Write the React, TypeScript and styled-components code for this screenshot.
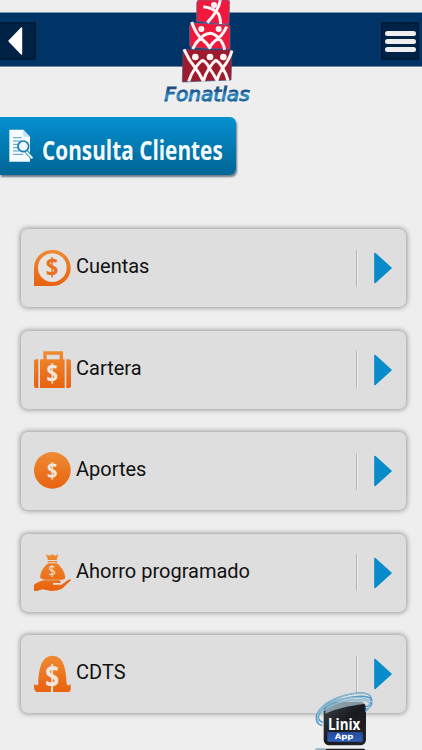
import React from 'react';
import styled, { createGlobalStyle } from 'styled-components';

const GlobalStyle = createGlobalStyle`
  * { box-sizing: border-box; }
  html, body { margin: 0; padding: 0; overflow: hidden; background: #eeeeee; }
`;

const Screen = styled.div`
  position: relative;
  width: 422px;
  height: 750px;
  overflow: hidden;
  background: #eeeeee;
  font-family: Roboto, 'Liberation Sans', sans-serif;
`;

const Header = styled.header`
  display: flex;
  justify-content: space-between;
  align-items: flex-start;
  height: 55px;
  margin-top: 12px;
  padding: 9px 3px 0 0;
  background: #003467;
  border-top: 1px solid #8095ad;
  border-bottom: 1px solid #7187a2;
`;

const HeaderButton = styled.button<{ $flush?: boolean }>`
  display: flex;
  align-items: center;
  justify-content: center;
  width: ${p => (p.$flush ? 36 : 38)}px;
  height: 38px;
  padding: ${p => (p.$flush ? '0 3px 0 0' : '0')};
  background: #002345;
  border: 2px solid #001b38;
  border-left-width: ${p => (p.$flush ? 0 : 2)}px;
`;

const MenuBars = styled.span`
  display: flex;
  flex-direction: column;
  gap: 3px;
`;

const MenuBar = styled.span`
  width: 31px;
  height: 5px;
  border-radius: 3px;
  background: #eeeef0;
`;

const Logo = styled.svg`
  position: absolute;
  left: 150px;
  top: 0;
  width: 120px;
  height: 110px;
`;

const Banner = styled.h1`
  display: flex;
  align-items: center;
  width: 236px;
  height: 58px;
  margin: 50px 0 0;
  padding-left: 9px;
  border-radius: 0 6px 6px 0;
  background: linear-gradient(#0590d0, #006596);
  box-shadow: 1px 2px 2px rgba(40, 60, 75, 0.65);
`;

const BannerIcon = styled.svg`
  width: 25px;
  height: 34px;
  flex: none;
`;

const BannerText = styled.span`
  margin: 8px 0 0 8px;
  font: 700 26.5px/36px 'Open Sans', 'Noto Sans', sans-serif;
  color: #f4fbff;
  white-space: nowrap;
  transform: scaleX(0.785);
  transform-origin: left;
`;

const Menu = styled.nav`
  display: flex;
  flex-direction: column;
  gap: 23.5px;
  padding: 54px 16px 0 21px;
`;

const Row = styled.a`
  display: flex;
  align-items: center;
  flex: none;
  height: 78px;
  padding-left: 13px;
  border-radius: 7px;
  background: #dedede;
  color: #111111;
  box-shadow: 0 0 5px 1px rgba(0, 0, 0, 0.36);
`;

const RowIcon = styled.svg`
  width: 37px;
  height: 38px;
  flex: none;
  overflow: visible;
`;

const RowLabel = styled.span`
  flex: 1;
  margin: -4px 0 0 5px;
  font-size: 20px;
  line-height: 28px;
  white-space: nowrap;
`;

const Divider = styled.span`
  width: 2px;
  height: 37px;
  background: linear-gradient(90deg, #b5b5b5 50%, #efefef 50%);
`;

const Chevron = styled.svg`
  width: 18px;
  height: 32px;
  margin: 0 14px 0 16px;
`;

const Badge = styled.svg`
  position: absolute;
  left: 300px;
  top: 680px;
  width: 122px;
  height: 70px;
`;

type DollarProps = { y: number; size: number; fill: string; weight?: number; narrow?: number };

const Dollar = ({ y, size, fill, weight = 700, narrow = 0.9 }: DollarProps) => (
  <text
    transform={`translate(54.5 ${y}) scale(${narrow} 1)`}
    fontSize={size}
    fill={fill}
    textAnchor="middle"
    fontFamily="'Open Sans', sans-serif"
    fontWeight={weight}
  >
    $
  </text>
);

const orange = 'url(#orange)';
const pale = '#f1e6dd';

const icons: Record<string, React.ReactNode> = {
  cuentas: (
    <>
      <path d="M0 110V56A55 54 0 1 1 55 110Z" fill={orange} />
      <circle cx="55" cy="55" r="43" fill="#e6e4e3" />
      <Dollar y={79} size={74} fill="#e97222" />
    </>
  ),
  cartera: (
    <>
      <path d="M33 28V5H82V28" fill="none" stroke={orange} strokeWidth="10" />
      <path d="M6 24H13V110H6Q0 110 0 104V30Q0 24 6 24ZM97 24H104Q111 24 111 30V104Q111 110 104 110H97Z" fill={orange} />
      <rect x="18" y="24" width="74" height="86" fill={orange} />
      <Dollar y={92} size={74} fill={pale} narrow={0.82} />
    </>
  ),
  aportes: (
    <>
      <circle cx="55" cy="54" r="55" fill={orange} />
      <Dollar y={76} size={65} fill={pale} narrow={0.85} />
    </>
  ),
  ahorro: (
    <>
      <path d="M36 0L47 4L55 0L63 4L73 0L68 17H42ZM41 20H70V24H41ZM42 27H69C83 39 95 56 93 73L85 76H32L19 72C17 54 29 38 42 27Z" fill={orange} />
      <Dollar y={66} size={45} fill={pale} weight={500} narrow={0.85} />
      <path d="M0 91C14 82 24 77 36 78L72 78Q84 79 79 86H57V91H82L102 77Q111 72 111 78L84 103Q69 110 52 110L25 105L12 109L0 110Z" fill={orange} />
    </>
  ),
  cdts: (
    <>
      <path d="M13 86C14 31 26 2 55 1C86 2 96 31 98 86Q103 93 109 86Q113 101 106 110H7Q-3 101 1 86Q8 93 13 86Z" fill={orange} />
      <Dollar y={95} size={92} fill={pale} weight={700} narrow={0.8} />
      <path d="M54 97V111" stroke={pale} strokeWidth="6" />
    </>
  ),
};

const rows = [
  { icon: 'cuentas', label: 'Cuentas' },
  { icon: 'cartera', label: 'Cartera' },
  { icon: 'aportes', label: 'Aportes' },
  { icon: 'ahorro', label: 'Ahorro programado' },
  { icon: 'cdts', label: 'CDTS' },
];

const FonatlasLogo = () => (
  <Logo viewBox="0 0 360 330">
    <defs>
      <linearGradient id="word" x1="0" y1="0" x2="0" y2="1">
        <stop offset="0.25" stopColor="#174c83" />
        <stop offset="0.6" stopColor="#2f91cb" />
        <stop offset="0.85" stopColor="#174d85" />
      </linearGradient>
    </defs>
    <path d="M144 0H234Q239 0 239 7L237 71L215 73L140 64V8Z" fill="#f0183c" stroke="#5874a5" strokeWidth="2" />
    <path d="M126 68L236 74Q240 75 240 83V148L126 143Q119 142 119 135V76Z" fill="#ed1a3d" stroke="#5874a5" strokeWidth="2" />
    <path d="M99 148L246 150L243 240L97 246Z" fill="#9e1b2d" stroke="#40527f" strokeWidth="2" />
    <g fill="none" stroke="#fff5f4" strokeWidth="9">
      <path d="M211 1Q205 34 172 68" />
      <path d="M160 20Q192 24 204 40Q211 50 212 72" />
      <path d="M125 66Q136 98 152 114Q172 130 182 146M128 147Q136 128 152 114Q166 101 180 100Q194 101 206 114Q220 128 224 149M230 80Q220 102 206 114Q186 128 176 146" />
      <path d="M102 148Q116 180 136 204Q150 222 160 244M116 244Q122 224 136 204Q150 184 158 181Q168 184 178 204Q192 224 202 243M160 244Q166 222 178 204Q190 185 198 181Q208 186 218 204Q230 224 234 242M246 152Q238 180 218 204Q206 222 200 243" />
    </g>
    <g fill="#fff5f4">
      <circle cx="192" cy="15" r="9" />
      <circle cx="154" cy="87" r="9" />
      <circle cx="206" cy="87" r="9" />
      <circle cx="136" cy="171" r="10" />
      <circle cx="180" cy="171" r="10" />
      <circle cx="220" cy="171" r="10" />
    </g>
    <text
      x="43"
      y="304"
      fontSize="56"
      textLength="256"
      lengthAdjust="spacingAndGlyphs"
      fontFamily="'DejaVu Sans', sans-serif"
      fontStyle="italic"
      fill="url(#word)"
      stroke="url(#word)"
      strokeWidth="3"
    >
      Fonatlas
    </text>
  </Logo>
);

const LinixBadge = () => (
  <Badge viewBox="0 0 366 210">
    <defs>
      <linearGradient id="app" x1="0" y1="0" x2="0" y2="1">
        <stop offset="0" stopColor="#234a9b" />
        <stop offset="1" stopColor="#3260bd" />
      </linearGradient>
      <linearGradient id="case" x1="0" y1="0" x2="1" y2="1">
        <stop offset="0" stopColor="#3d4349" />
        <stop offset="0.5" stopColor="#171a1f" />
        <stop offset="1" stopColor="#222529" />
      </linearGradient>
    </defs>
    <rect x="71" y="66" width="127" height="130" rx="17" fill="url(#case)" />
    <path d="M77 69C98 51 163 48 193 65L192 72C145 78 108 86 76 101Z" fill="#a8bdc9" opacity="0.75" />
    <rect x="82" y="156" width="106" height="29" rx="2" fill="url(#app)" />
    <text x="84" y="150" fontSize="46" textLength="97" lengthAdjust="spacingAndGlyphs" fontFamily="'Open Sans', sans-serif" fontWeight="700" fill="#ffffff">Linix</text>
    <text x="104" y="178" fontSize="23" textLength="56" lengthAdjust="spacingAndGlyphs" fontFamily="'DejaVu Sans', sans-serif" fontWeight="700" fill="#ffffff">App</text>
    <g fill="none" stroke="#5499c3" strokeWidth="4">
      <path d="M67 137C39 128 43 98 76 73C118 42 198 28 211 49C221 64 211 77 194 84" />
      <path d="M70 128C44 118 54 91 91 71C134 49 202 42 212 57C222 74 207 86 196 90" />
      <path d="M57 120C42 98 72 68 114 52C158 36 205 36 209 49" stroke="#86b8d4" />
      <path d="M56 127C42 103 68 78 108 62C148 50 194 47 216 66" stroke="#8bbbd5" />
      <path d="M61 102C82 72 153 53 197 61C215 67 211 86 196 95" stroke="#8bbbd5" />
    </g>
    <path d="M46 207H77" stroke="#7aa6c1" strokeWidth="4" />
    <path d="M75 210L80 206H192L197 210Z" fill="#171a1f" />
  </Badge>
);

export default function App() {
  return (
    <Screen>
      <GlobalStyle />
      <Header>
        <HeaderButton $flush aria-label="Volver">
          <svg width="16" height="28" viewBox="0 0 16 28">
            <path d="M13.5 1V27L1 14Z" fill="#fff" stroke="#fff" strokeWidth="1.4" strokeLinejoin="round" />
          </svg>
        </HeaderButton>
        <HeaderButton aria-label="Menú">
          <MenuBars><MenuBar /><MenuBar /><MenuBar /></MenuBars>
        </HeaderButton>
      </Header>
      <FonatlasLogo />
      <Banner>
        <BannerIcon viewBox="0 0 75 102">
          <path d="M1 2H43L63 23V98H1Z" fill="#f5fbff" />
          <path d="M43 2V23H63" fill="#c3e1ef" />
          <path d="M12 26H38M12 36H38M12 46H30M12 56H27M12 66H30M12 76H42" stroke="#4aa1c9" strokeWidth="3" />
          <circle cx="43" cy="52" r="16" fill="#edf9ff" stroke="#147ead" strokeWidth="5" />
          <path d="M51 66L70 88" stroke="#147ead" strokeWidth="11" />
          <path d="M52 68L70 88" stroke="#f5fbff" strokeWidth="6" />
        </BannerIcon>
        <BannerText>Consulta Clientes</BannerText>
      </Banner>
      <Menu>
        {rows.map(row => (
          <Row key={row.label}>
            <RowIcon viewBox="0 0 111 112">
              <defs>
                <linearGradient id="orange" gradientUnits="userSpaceOnUse" x1="0" y1="0" x2="0" y2="110">
                  <stop offset="0" stopColor="#ee8b32" />
                  <stop offset="1" stopColor="#e9620f" />
                </linearGradient>
              </defs>
              {icons[row.icon]}
            </RowIcon>
            <RowLabel>{row.label}</RowLabel>
            <Divider />
            <Chevron viewBox="0 0 18 32">
              <path d="M1 1.5V30.5L17 16Z" fill="#078bc9" stroke="#078bc9" strokeWidth="1.6" strokeLinejoin="round" />
            </Chevron>
          </Row>
        ))}
      </Menu>
      <LinixBadge />
    </Screen>
  );
}
